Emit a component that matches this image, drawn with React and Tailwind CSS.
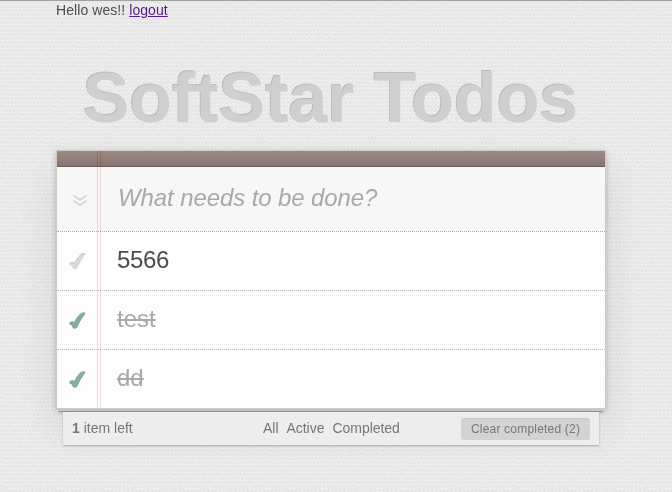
import React from 'react';

const todos = [
  { title: '5566', done: false },
  { title: 'test', done: true },
  { title: 'dd', done: true },
];

function Texture() {
  return (
    <svg className="absolute inset-0 h-full w-full" aria-hidden="true">
      <defs>
        <filter id="grain" x="0" y="0" width="100%" height="100%">
          <feTurbulence type="fractalNoise" baseFrequency="0.5" numOctaves="1" seed="4" />
          <feColorMatrix values="0 0 0 0 0  0 0 0 0 0  0 0 0 0 0  0.08 0 0 0 -0.035" />
        </filter>
        <pattern id="weave" width="4" height="4" patternUnits="userSpaceOnUse">
          <path d="M0 0h1v1H0zM1 1h1v1H1zM2 2h1v1H2zM3 1h1v1H3z" fill="#000" fillOpacity=".025" />
          <path d="M2 0h1v1H2zM0 2h1v1H0zM1 3h2v1H1z" fill="#fff" fillOpacity=".3" />
        </pattern>
      </defs>
      <rect width="100%" height="100%" fill="url(#weave)" />
      <rect width="100%" height="100%" filter="url(#grain)" />
    </svg>
  );
}

const checkPath =
  'M1.200 12.600C1.700 11 3.600 10.200 4.800 10.400c.7.100 1 .6 1.100 1.300C7.600 8.500 9.900 5.300 12.300 2.900c1-1 2.900-1.300 4.400-1.300.5 0 .6.400.3.800-3.200 4.200-5.700 8.600-7.700 13.400-.6 1.300-3.600 1.900-4.300.7-.7-1.300-.9-2.500-1.900-3.100-.5-.3-1.300-.4-1.900-.8Z';

function Check({ done }) {
  return (
    <svg className="ml-[11px] h-5 w-5" viewBox="0 0 20 20" aria-hidden="true">
      <path d={checkPath} transform={done ? 'translate(0 1.500)' : 'translate(0 .5)'} fill={done ? '#669991' : '#bfbfbf'} />
      <path d={checkPath} transform={done ? 'translate(0 .7)' : 'translate(0 1.300)'} fill={done ? '#85ada7' : '#d9d9d9'} />
    </svg>
  );
}

export default function App() {
  return (
    <div className="relative h-[492px] w-[672px] overflow-hidden border-t border-[#a1a1a1] bg-[#ebebeb] font-['Liberation_Sans',Arial,sans-serif] text-sm text-[#4d4d4d]">
      <Texture />
      <div className="relative ml-14 w-[550px]">
        <div className="h-[60px] leading-[19px] tracking-[0.07px]">
          Hello wes!! <a href="#" className="text-[#551a8b] underline">logout</a>
        </div>
        <h1 className="h-[89px] pr-[1px] whitespace-nowrap text-center text-[70px] leading-[74px] font-bold tracking-[-0.07px] text-[#cfcfcf] [text-shadow:-1px_-1px_0_rgba(0,0,0,0.2)]">
          SoftStar Todos
        </h1>
        <main className="relative border border-[#ccc] bg-[#fdfdfd] shadow-[0_2px_6px_0_rgba(0,0,0,0.2),0_20px_40px_0_rgba(0,0,0,0.09)]">
          <header>
            <div className="h-4 border-b border-[#6c615c] bg-gradient-to-b from-[#9d8b83] to-[#84766f]" />
            <div className="flex h-16 items-center bg-[#f7f7f7]">
              <svg className="mt-[3px] ml-4 h-4 w-[14px]" viewBox="0 0 14 16" fill="none" stroke="#d6d6d6" strokeWidth="2" aria-hidden="true">
                <path d="M.5 2.500 7 6.800l6.500-4.300M.5 7.800 7 12.100l6.500-4.300" />
              </svg>
              <input
                className="mb-[3px] ml-[31px] w-96 bg-transparent text-2xl tracking-[-0.1px] italic outline-none placeholder:text-[#a9a9a9]"
                placeholder="What needs to be done?"
              />
            </div>
          </header>
          <ul>
            {todos.map((todo) => (
              <li key={todo.title} className="flex h-[59px] items-center border-t border-dotted border-[#bbb] first:border-[#adadad]">
                <Check done={todo.done} />
                <span
                  className={
                    todo.done
                      ? 'mb-[2px] ml-[29px] text-2xl text-[#a9a9a9] line-through decoration-[1.5px]'
                      : 'mb-[2px] ml-[29px] text-2xl tracking-[-0.35px]'
                  }
                >
                  {todo.title}
                </span>
              </li>
            ))}
          </ul>
          <div className="pointer-events-none absolute top-0 bottom-0 left-10 w-1 border-x border-[#f5d6d0]/90 mix-blend-multiply" />
        </main>
        <div className="mx-[3px] h-[3px] border-b border-[#aaa] bg-[#ececec] shadow-[0_1px_1px_rgba(0,0,0,0.1)]" />
        <footer className="relative mx-[7px] flex h-[33px] items-center justify-between bg-[#ededed] px-[9px] text-[#777] shadow-[0_1px_2px_rgba(0,0,0,0.25)]">
          <span className="mb-[2px]"><strong>1</strong> item left</span>
          <nav className="absolute top-[6px] left-[200px] flex gap-2 tracking-[-0.03px]">
            <a>All</a>
            <a>Active</a>
            <a>Completed</a>
          </nav>
          <button className="mt-[2px] h-[21px] w-[129px] rounded-[3px] bg-[#d3d3d3] text-xs leading-[21px] tracking-[0.2px] shadow-[0_-1px_0_0_rgba(0,0,0,0.15)]">
            Clear completed (2)
          </button>
        </footer>
      </div>
    </div>
  );
}
